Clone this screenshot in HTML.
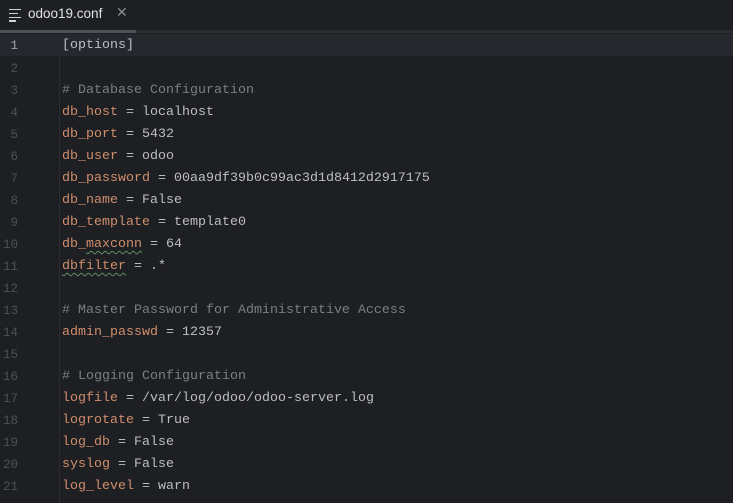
<!DOCTYPE html><html><head><style>
body{margin:0;width:733px;height:503px;background:#1e1f22;overflow:hidden;font-family:"Liberation Mono",monospace;}
.tabbar{height:30px;background:#1e1f22;position:relative;border-bottom:3px solid #2b2d30;}
.tab{position:absolute;left:0;top:0;height:30px;width:136px;}
.tab .ul{position:absolute;left:0;bottom:-3px;width:136px;height:3px;background:#4e5157;}
.tab .name{position:absolute;left:28px;top:6px;font:13.5px "Liberation Sans",sans-serif;color:#dfe1e5;}
.tab .x{position:absolute;left:116px;top:4px;font:14px "Liberation Sans",sans-serif;color:#868a91;}
.ic{position:absolute;left:9px;top:9px;width:12px;}
.ic i{display:block;height:1.3px;background:#ced0d6;margin-bottom:2.5px;}
.gut{position:absolute;left:59px;top:33px;width:1px;height:470px;background:#2b2d30;}
.line{position:absolute;left:0;width:733px;height:22px;line-height:22px;font-size:13.33px;}
.n{position:absolute;left:0;width:18px;text-align:right;color:#4b5059;font-size:12.5px;}
.t{position:absolute;left:62px;color:#bcbec4;white-space:pre;}
.k{color:#cf8e6d}.c{color:#7a7e85}
.cur{background:#26282e}.cur .n{color:#a1a3ab}
.w{text-decoration:underline wavy #5f8c5f;text-underline-offset:3px;text-decoration-thickness:1px}
</style></head><body>
<div class="tabbar"><div class="tab"><div class="ic"><i></i><i style="width:9px"></i><i></i><i style="width:7px"></i></div><span class="name">odoo19.conf</span><span class="x">✕</span><div class="ul"></div></div></div>
<div class="gut"></div>
<div class="line cur" style="top:34px;line-height:24px"><span class="n">1</span><span class="t">[options]</span></div>
<div class="line" style="top:58px"><span class="n">2</span></div>
<div class="line" style="top:80px"><span class="n">3</span><span class="t c"># Database Configuration</span></div>
<div class="line" style="top:102px"><span class="n">4</span><span class="t"><span class="k">db_host</span> = localhost</span></div>
<div class="line" style="top:124px"><span class="n">5</span><span class="t"><span class="k">db_port</span> = 5432</span></div>
<div class="line" style="top:146px"><span class="n">6</span><span class="t"><span class="k">db_user</span> = odoo</span></div>
<div class="line" style="top:168px"><span class="n">7</span><span class="t"><span class="k">db_password</span> = 00aa9df39b0c99ac3d1d8412d2917175</span></div>
<div class="line" style="top:190px"><span class="n">8</span><span class="t"><span class="k">db_name</span> = False</span></div>
<div class="line" style="top:212px"><span class="n">9</span><span class="t"><span class="k">db_template</span> = template0</span></div>
<div class="line" style="top:234px"><span class="n">10</span><span class="t"><span class="k">db_<span class="w">maxconn</span></span> = 64</span></div>
<div class="line" style="top:256px"><span class="n">11</span><span class="t"><span class="k w">dbfilter</span> = .*</span></div>
<div class="line" style="top:278px"><span class="n">12</span></div>
<div class="line" style="top:300px"><span class="n">13</span><span class="t c"># Master Password for Administrative Access</span></div>
<div class="line" style="top:322px"><span class="n">14</span><span class="t"><span class="k">admin_passwd</span> = 12357</span></div>
<div class="line" style="top:344px"><span class="n">15</span></div>
<div class="line" style="top:366px"><span class="n">16</span><span class="t c"># Logging Configuration</span></div>
<div class="line" style="top:388px"><span class="n">17</span><span class="t"><span class="k">logfile</span> = /var/log/odoo/odoo-server.log</span></div>
<div class="line" style="top:410px"><span class="n">18</span><span class="t"><span class="k">logrotate</span> = True</span></div>
<div class="line" style="top:432px"><span class="n">19</span><span class="t"><span class="k">log_db</span> = False</span></div>
<div class="line" style="top:454px"><span class="n">20</span><span class="t"><span class="k">syslog</span> = False</span></div>
<div class="line" style="top:476px"><span class="n">21</span><span class="t"><span class="k">log_level</span> = warn</span></div>
</body></html>
